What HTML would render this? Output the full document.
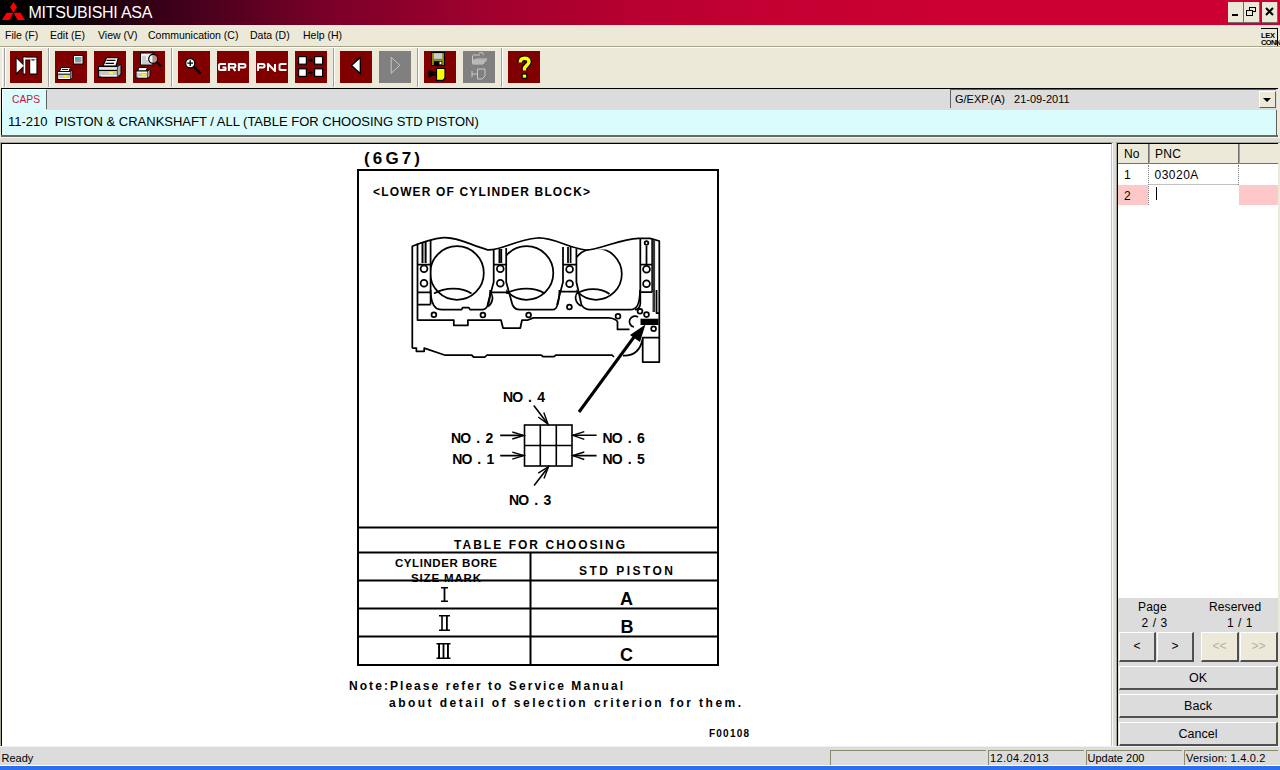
<!DOCTYPE html>
<html><head><meta charset="utf-8">
<style>
*{margin:0;padding:0;box-sizing:border-box}
html,body{width:1280px;height:770px;overflow:hidden}
body{position:relative;background:#ece9d8;font-family:"Liberation Sans",sans-serif;font-size:11px;color:#000}
.a{position:absolute}
.t{position:absolute;white-space:pre;line-height:1}
#title{left:0;top:0;width:1280px;height:25px;background:linear-gradient(90deg,#000 0px,#080004 60px,#380018 160px,#780028 320px,#a0002e 480px,#b80030 640px,#c60032 800px,#cc0033 960px,#cc0033 1280px)}
.ico{position:absolute;top:51px;width:32px;height:32px;background:#800000}
.ico.dis{background:#808080}
.sep{position:absolute;top:48px;width:2px;height:39px;border-left:1px solid #a0a0a0;border-right:1px solid #fff}
.grey{background:#dcdcdc}
.cyan{background:#dafcfc}
.btn{position:absolute;background:#dcdcdc;border-top:1px solid #fff;border-left:1px solid #fff;border-right:2px solid #505050;border-bottom:2px solid #505050;text-align:center;font-size:12px}
</style></head><body>
<!-- title bar -->
<div id="title" class="a"></div>
<svg class="a" style="left:0;top:0" width="30" height="25" viewBox="0 0 30 25">
<polygon points="13.5,2 17,7.3 13.5,12.6 10,7.3" fill="#f00"/>
<polygon points="2,20 6.5,12.8 13.3,12.8 9.5,20" fill="#f00"/>
<polygon points="25,20 20.5,12.8 13.7,12.8 17.5,20" fill="#f00"/>
</svg>
<div class="t" style="left:28.5px;top:5px;font-size:16px;letter-spacing:-0.25px;color:#fff">MITSUBISHI ASA</div>
<div class="a" style="left:1228px;top:2px;width:16px;height:21px;background:#ece9d8;border-right:1px solid #707070;border-bottom:1px solid #707070"></div>
<div class="a" style="left:1244px;top:2px;width:16px;height:21px;background:#ece9d8;border-right:1px solid #707070;border-bottom:1px solid #707070"></div>
<div class="a" style="left:1262px;top:2px;width:16px;height:21px;background:#ece9d8;border-right:1px solid #707070;border-bottom:1px solid #707070"></div>
<div class="a" style="left:1232px;top:14px;width:6px;height:2px;background:#000"></div>
<svg class="a" style="left:1244px;top:2px" width="16" height="21"><rect x="5.5" y="5.5" width="6" height="4" fill="none" stroke="#000"/><rect x="2.5" y="8.5" width="6" height="5" fill="#ece9d8" stroke="#000"/></svg>
<svg class="a" style="left:1262px;top:2px" width="16" height="21"><path d="M4 6 L11 13 M11 6 L4 13" stroke="#000" stroke-width="2"/></svg>

<!-- menu -->
<div class="t" style="left:5px;top:30px;font-size:10.5px">File (F)</div>
<div class="t" style="left:50px;top:30px;font-size:10.5px">Edit (E)</div>
<div class="t" style="left:98px;top:30px;font-size:10.5px">View (V)</div>
<div class="t" style="left:148px;top:30px;font-size:10.5px">Communication (C)</div>
<div class="t" style="left:250px;top:30px;font-size:10.5px">Data (D)</div>
<div class="t" style="left:303px;top:30px;font-size:10.5px">Help (H)</div>
<div class="a" style="left:1261px;top:28px;width:17px;height:18px;border-top:1px solid #000;border-right:1px solid #000"></div><div class="t" style="left:1261px;top:32px;font-size:7.5px;font-weight:bold;letter-spacing:-0.3px">LEX</div><div class="t" style="left:1261px;top:39px;font-size:7.5px;font-weight:bold;letter-spacing:-0.6px">CONN</div>
<div class="a" style="left:0;top:46px;width:1280px;height:1px;background:#a8a58c"></div>
<div class="a" style="left:0;top:47px;width:1280px;height:1px;background:#fff"></div>

<!-- toolbar -->
<div class="a" style="left:2px;top:48px;width:1px;height:39px;background:#fff"></div>
<div class="sep" style="left:4px"></div>
<div class="sep" style="left:48px"></div>
<div class="sep" style="left:171px"></div>
<div class="sep" style="left:333px"></div>
<div class="sep" style="left:417px"></div>
<div class="sep" style="left:501px"></div>
<div class="ico" style="left:10px"></div>
<div class="ico" style="left:55px"></div>
<div class="ico" style="left:94px"></div>
<div class="ico" style="left:133px"></div>
<div class="ico" style="left:178px"></div>
<div class="ico" style="left:217px"></div>
<div class="ico" style="left:256px"></div>
<div class="ico" style="left:295px"></div>
<div class="ico" style="left:340px"></div>
<div class="ico dis" style="left:379px"></div>
<div class="ico" style="left:424px"></div>
<div class="ico dis" style="left:463px"></div>
<div class="ico" style="left:508px"></div>
<svg class="a" style="left:10px;top:51px" width="32" height="32" viewBox="0 0 32 32">
<g fill="#000"><path d="M5.6 5.2V24.2L15.2 14.7Z"/><rect x="12.6" y="5.6" width="3.6" height="18"/><rect x="12.6" y="5.6" width="14.8" height="3.8"/><rect x="19.2" y="7.6" width="8.2" height="16"/></g>
<g fill="#fff"><path d="M6.6 7.6V21.8L13.8 14.7Z"/><rect x="13.6" y="6.6" width="1.7" height="16"/><rect x="13.6" y="6.6" width="12.8" height="1.9"/><rect x="20.2" y="8.5" width="6.2" height="14"/></g>
<rect x="21.5" y="8.5" width="3" height="1" fill="#000"/>
</svg>
<svg class="a" style="left:55px;top:51px" width="32" height="32" viewBox="0 0 32 32">
<rect x="18.5" y="4.5" width="9.5" height="8.5" fill="#fff" stroke="#000"/>
<rect x="20" y="6" width="6.5" height="5.5" fill="#999"/>
<rect x="20" y="6" width="3.5" height="3" fill="#0cc"/>
<path d="M6 16.5H15.5L14 20.5H4.5Z" fill="#fff" stroke="#000"/>
<path d="M7 18.5H13" stroke="#000" stroke-width=".9"/>
<rect x="2.5" y="20.5" width="13" height="8" fill="#c8c8c8" stroke="#000"/>
<path d="M3 21.5H15M4 27.5H15" stroke="#fff"/>
<path d="M3 23.3H15" stroke="#000" stroke-width=".8"/>
<rect x="8.5" y="24.5" width="3.5" height="1.5" fill="#ff0"/>
<path d="M15.5 20.5L17.2 19V26.5L15.5 28.5" fill="#aaa" stroke="#000" stroke-width=".8"/>
</svg>
<svg class="a" style="left:94px;top:51px" width="32" height="32" viewBox="0 0 32 32">
<path d="M12.5 6.6H24.4L22 15H9Z" fill="#fff" stroke="#000" stroke-width="1.2"/>
<path d="M12.5 9.3H21.5M11.5 12.3H20" stroke="#000" stroke-width="1.2"/>
<rect x="4.5" y="15.5" width="19" height="10.5" fill="#c8c8c8" stroke="#000" stroke-width="1.2"/>
<path d="M5 17H23M7 24.8H23" stroke="#fff" stroke-width="1.2"/>
<path d="M5 19.5H23" stroke="#000" stroke-width="1"/>
<rect x="15" y="21" width="4" height="2" fill="#ff0"/>
<path d="M23.5 15.5L27 13V23L23.5 26" fill="#b0b0b0" stroke="#000" stroke-width="1"/>
</svg>
<svg class="a" style="left:133px;top:51px" width="32" height="32" viewBox="0 0 32 32">
<rect x="7.5" y="2" width="12.5" height="12" fill="#f0f0f0" stroke="#000"/>
<path d="M9 6H13M9 8H13M9 10H17M9 12H19" stroke="#aaa"/>
<circle cx="20.2" cy="7.8" r="4.5" fill="rgba(255,255,255,0.55)" stroke="#000" stroke-width="1.2"/>
<path d="M23.5 11L28.2 15.2" stroke="#000" stroke-width="2"/>
<path d="M6 16.5H14.5L13 20H4.5Z" fill="#fff" stroke="#000"/>
<rect x="3" y="20" width="12" height="7" fill="#c8c8c8" stroke="#000"/>
<path d="M4 21.3H14M5 26H14" stroke="#fff"/>
<rect x="9" y="23" width="3.5" height="1.5" fill="#ff0"/>
<path d="M15 20L17 18V25L15 27" fill="#aaa" stroke="#000" stroke-width=".8"/>
</svg>
<svg class="a" style="left:178px;top:51px" width="32" height="32" viewBox="0 0 32 32">
<path d="M15.5 15.5L22.5 22.5" stroke="#000" stroke-width="2.4"/>
<circle cx="12.2" cy="12.2" r="4.6" fill="#fff" stroke="#000" stroke-width="1.3"/>
<path d="M9.3 12.2H15.1M12.2 9.3V15.1" stroke="#000" stroke-width="1.3"/>
</svg>
<svg class="a" style="left:217px;top:51px" width="32" height="32" viewBox="0 0 32 32">
<path d="M9 13H3.5Q2 13 2 14.5V17.5Q2 19 3.5 19H8.5V16.5H5.5 M11.9 20V13H16.9Q18.4 13 18.4 14.5V15Q18.4 16.5 16.9 16.5H11.9 M15.9 16.5L18.4 20 M21.9 20V13H26.9Q28.4 13 28.4 14.5V15Q28.4 16.5 26.9 16.5H21.9" fill="none" stroke="#fff" stroke-width="2" stroke-linejoin="round"/>
</svg>
<svg class="a" style="left:256px;top:51px" width="32" height="32" viewBox="0 0 32 32">
<path d="M2 20V13H7Q8.5 13 8.5 14.5V15Q8.5 16.5 7 16.5H2 M12 20V13L19 20V13 M30.5 13H25Q23.5 13 23.5 14.5V17.5Q23.5 19 25 19H30.5" fill="none" stroke="#fff" stroke-width="2" stroke-linejoin="round"/>
</svg>
<svg class="a" style="left:295px;top:51px" width="32" height="32" viewBox="0 0 32 32">
<g fill="#fff" stroke="#000" stroke-width="1.2">
<rect x="3.6" y="5.6" width="7.8" height="7.6"/><rect x="19.6" y="5.6" width="8" height="7.6"/>
<rect x="3.6" y="17.8" width="7.8" height="7.6"/><rect x="19.6" y="17.8" width="8" height="7.6"/>
</g>
<path d="M13 9.4H16M13 21.6H16" stroke="#000" stroke-width="1.3"/>
<path d="M15.5 7.3L18.2 9.4L15.5 11.5ZM15.5 19.5L18.2 21.6L15.5 23.7Z" fill="#000"/>
</svg>
<svg class="a" style="left:340px;top:51px" width="32" height="32" viewBox="0 0 32 32">
<path d="M11.4 14.4L20.3 6.5V22.5Z" fill="#fff" stroke="#000" stroke-width="1.3"/>
</svg>
<svg class="a" style="left:379px;top:51px" width="32" height="32" viewBox="0 0 32 32">
<path d="M12.2 6.3V22.3L20.8 14.3Z" fill="none" stroke="#c8c8c8" stroke-width="1"/>
</svg>
<svg class="a" style="left:424px;top:51px" width="32" height="32" viewBox="0 0 32 32">
<rect x="7.5" y="1.5" width="13" height="13" fill="#8a8a10" stroke="#000" stroke-width="1"/>
<rect x="9.9" y="2.2" width="8.3" height="5.6" fill="#ccc"/>
<rect x="9.9" y="10.2" width="8.3" height="3.8" fill="#000"/>
<rect x="15.5" y="10.8" width="2" height="2.6" fill="#fff"/>
<path d="M12.5 17.5H21V27L19 29.3H12.5Z" fill="#ff0" stroke="#000" stroke-width="1.2"/>
<path d="M5 19.5L9 21.5H13M5 19.5V26L9 24H12" fill="#000" stroke="#000" stroke-width="1.2"/>
</svg>
<svg class="a" style="left:463px;top:51px" width="32" height="32" viewBox="0 0 32 32">
<g fill="none" stroke="#c8c8c8" stroke-width="1">
<path d="M9.5 4.5V12M10 4H17M9.5 13L13 8H24L20 13Z" />
<path d="M16 2L19.5 1.5L20.5 4"/>
<path d="M14.5 18H22V25L19 28H14.5V18M9 20V26M9 23H14"/>
</g>
<path d="M10 8.5H24L20 13H9.5Z" fill="#b8b8b8"/>
</svg>
<svg class="a" style="left:508px;top:51px" width="32" height="32" viewBox="0 0 32 32">
<path d="M12.2 11.6C12.2 8.6 14 7.3 16.5 7.3C19.2 7.3 21 8.8 21 11.1C21 13.8 17.2 14.6 16.5 17.3V19.6" fill="none" stroke="#000" stroke-width="5.6"/>
<rect x="13.7" y="22.5" width="5.6" height="5.3" fill="#000"/>
<path d="M12.2 11.6C12.2 8.6 14 7.3 16.5 7.3C19.2 7.3 21 8.8 21 11.1C21 13.8 17.2 14.6 16.5 17.3V19.6" fill="none" stroke="#ff0" stroke-width="3.4"/>
<rect x="14.8" y="23.6" width="3.4" height="3.1" fill="#ff0"/>
</svg>


<!-- tab strip -->
<div class="a" style="left:1px;top:88px;width:1277px;height:1px;background:#000"></div>
<div class="a" style="left:1px;top:88px;width:1px;height:49px;background:#000"></div>
<div class="a grey" style="left:2px;top:89px;width:1275px;height:21px"></div>
<div class="a cyan" style="left:2px;top:89px;width:44px;height:21px;border-top:1px solid #fff;border-left:1px solid #fff"></div>
<div class="a" style="left:46px;top:90px;width:1px;height:19px;background:#606060"></div>
<div class="t" style="left:12px;top:95px;font-size:10.3px;color:#d0103a">CAPS</div>
<div class="a grey" style="left:950px;top:89px;width:326px;height:19px;border-top:1px solid #606060;border-left:1px solid #606060"></div>
<div class="t" style="left:955px;top:94px;font-size:11px">G/EXP.(A)   21-09-2011</div>
<div class="a" style="left:1259px;top:91px;width:17px;height:17px;background:#ece9d8;border-top:1px solid #fff;border-left:1px solid #fff;border-right:1px solid #606060;border-bottom:1px solid #606060"></div>
<svg class="a" style="left:1259px;top:91px" width="17" height="17"><polygon points="4,7 12,7 8,11" fill="#000"/></svg>
<div class="a cyan" style="left:2px;top:110px;width:1275px;height:25px"></div>
<div class="a" style="left:1276px;top:110px;width:1px;height:26px;background:#606060"></div>
<div class="a" style="left:1px;top:135px;width:1277px;height:2px;background:#6a6a5a"></div>
<div class="t" style="left:8px;top:115px;font-size:13px">11-210  PISTON &amp; CRANKSHAFT / ALL (TABLE FOR CHOOSING STD PISTON)</div>
<div class="a" style="left:0;top:137px;width:1280px;height:1px;background:#f4f4f4"></div>
<div class="a grey" style="left:0;top:138px;width:1280px;height:4px"></div>

<!-- main panel -->
<div class="a" style="left:0;top:142px;width:1280px;height:1px;background:#a8a890"></div>
<div class="a" style="left:0;top:142px;width:1px;height:604px;background:#a8a890"></div>
<div class="a" style="left:1px;top:143px;width:1111px;height:603px;background:#fff;border-top:1px solid #000;border-left:1px solid #000;border-right:1px solid #c4c4c4"></div>
<div class="a" style="left:1112px;top:143px;width:1px;height:603px;background:#fafafa"></div>
<div class="a grey" style="left:1113px;top:142px;width:3px;height:604px"></div>
<div class="a" style="left:1116px;top:142px;width:1px;height:604px;background:#a8a890"></div>
<div class="a" style="left:1117px;top:143px;width:161px;height:603px;background:#fff;border-top:1px solid #000;border-left:1px solid #000"></div>
<svg class="a" style="left:0;top:0" width="1280" height="770" viewBox="0 0 1280 770">
<g font-family="Liberation Sans" font-weight="bold" fill="#000">
<text x="364" y="164" font-size="17" textLength="56" lengthAdjust="spacing">(6G7)</text>
<text x="373" y="195.6" font-size="12" textLength="217" lengthAdjust="spacing">&lt;LOWER OF CYLINDER BLOCK&gt;</text>
<text x="503.0 512.2 528.1 537.3" y="401.8" font-size="14">NO.4</text>
<text x="451.1 460.3 476.2 485.4" y="443.2" font-size="14">NO.2</text>
<text x="452.2 461.4 477.3 486.5" y="463.6" font-size="14">NO.1</text>
<text x="602.6 611.8 627.7 636.9" y="443.1" font-size="14">NO.6</text>
<text x="602.6 611.8 627.7 636.9" y="463.5" font-size="14">NO.5</text>
<text x="509.1 518.3 534.2 543.4" y="505.0" font-size="14">NO.3</text>
<text x="454" y="548.5" font-size="12" textLength="171" lengthAdjust="spacing">TABLE FOR CHOOSING</text>
<text x="395" y="567" font-size="11.5" textLength="102" lengthAdjust="spacing">CYLINDER BORE</text>
<text x="411" y="581.5" font-size="11.5" textLength="70" lengthAdjust="spacing">SIZE MARK</text>
<text x="579" y="574.5" font-size="12" textLength="94" lengthAdjust="spacing">STD PISTON</text>
<text x="620" y="604.5" font-size="18">A</text>
<text x="620.5" y="632.5" font-size="18">B</text>
<text x="620" y="660.5" font-size="18">C</text>
<text x="349" y="689.6" font-size="12" textLength="274" lengthAdjust="spacing">Note:Please refer to Service Manual</text>
<text x="389" y="706.6" font-size="12" textLength="352" lengthAdjust="spacing">about detail of selection criterion for them.</text>
<text x="709" y="737" font-size="10" textLength="40" lengthAdjust="spacing">F00108</text>
</g>
<g fill="none" stroke="#000" stroke-width="2">
<rect x="358" y="170" width="360" height="495"/>
<path d="M358 527.5H718M358 552.5H718M358 580.5H718M358 608.5H718M358 636.5H718M530.5 552.5V665"/>
</g>
<!-- roman numerals -->
<g fill="#000">
<path d="M441 587h7v1.5h-2.6v12h2.6v1.5h-7v-1.5h2.6v-12h-2.6z"/>
<path d="M439 615h11v1.6h-2.2v12.8h2.2v1.6h-11v-1.6h2.2v-12.8h-2.2zM442.8 616.6v12.8h3.2v-12.8z"/>
<path d="M436.5 643h14v1.6h-1.6v12.8h1.6v1.6h-14v-1.6h1.6v-12.8h-1.6zM440 644.6v12.8h2.6v-12.8zM444.4 644.6v12.8h2.6v-12.8z"/>
</g>
<!-- position diagram -->
<g fill="none" stroke="#000" stroke-width="1.6">
<rect x="524.5" y="425" width="47.5" height="41"/>
<path d="M540.3 425V466M556.3 425V466M524.5 445.5H572"/>
<path d="M500.2 435.4H523M500.2 455.6H523M573 435.3H596.6M573 455.6H596.6M533.8 405.4L547.5 423.5M534.1 485.4L548 467.5"/>
<path d="M512.3 432L523.8 435.4L512.3 439M512.3 452.2L523.8 455.6L512.3 459.2M584.3 431.7L572.8 435.3L584.3 439.3M584.3 452L572.8 455.6L584.3 459.5M538.2 417L548 424L543.8 412.6M538.2 473.2L548.5 466.7L544 478.4" stroke-width="1.4" stroke-linejoin="miter"/>
</g>
<path d="M579 412L637 333" stroke="#000" stroke-width="3"/>
<polygon points="645.5,324.5 640,342 630,335" fill="#000"/>
<!-- engine block -->
<g fill="none" stroke="#000" stroke-width="1.75" stroke-linejoin="round">
<path d="M412.3 348.2V246.3C420 243 430 239 443.7 237.6C458 237 470 245 487.5 249.8C500 251 515 240 537.5 238C555 237.5 568 248 585.7 250C600 250 620 238.5 638.7 238.3H650L659.3 241V362H642.7V337.6H659.3"/>
<path d="M412.3 348.2H416.4V351.3H424.2V348.2L444.5 355H471.5L473.6 357H485L487 355H541L543 356.7H554L556 355H612L614 357"/>
<path d="M642.7 339C640 352 632 356 623 355.6"/>
<path d="M417.5 243.5V320H453.8V325.3H467.9V320H501L503 328H520.3L522 320H528L533.3 317.9H608.7C613 318 617 320 617.5 321.7V329.4H629.5"/>
<path d="M430.6 240V304.5M417.5 264.7H430.6M417.5 292.3H430.6M417.5 304.5H430.6"/>
<path d="M422.5 242V263M425.6 241V263" stroke-width="2"/>
<path d="M493.7 250V282L487.5 305M506.2 248V282L512.5 305M493.7 264.7H506.2M490 292.3H509.5M499.4 249V263M501.3 249V263"/>
<path d="M563 247V282L557 305M576.4 249V282L581.5 305M563 264.5H576.4M560 291.7H579M568 247V263M570.6 247V263"/>
<path d="M640.3 238.5V304C640 308 637 309.7 635 309.7M652.2 238.5V292M640.3 264.5H652.2M640.3 292H652.2M646.5 246V264"/>
<path d="M653.8 240V312" stroke="#333" stroke-width="2.6"/>
<path d="M656.5 290V313H659"/>
<path d="M430.6 290C430.6 300 432 304.5 436 308C438 309.5 440 309.7 445 309.7H461.6L462.7 307.7H468.9L470 309.7H482C486 309.7 490 306 490.2 290"/>
<path d="M512.5 305C514 308 516 309.7 520 309.7H553C556 309.7 559 306 559.5 290"/>
<path d="M581.5 305C584 308.5 586 309.7 590 309.7H630C636 309.7 640 306 640 290"/>
<path d="M490.2 292C494 296 493 303 488 306.6M577.9 292C574 296 575 303 581.4 306"/>
<clipPath id="c1"><rect x="430.6" y="230" width="60" height="80"/></clipPath>
<clipPath id="c2"><rect x="506.2" y="230" width="60" height="80"/></clipPath>
<clipPath id="c3"><rect x="576.4" y="249.5" width="60" height="60"/></clipPath>
<circle cx="457" cy="273" r="26.8" clip-path="url(#c1)"/>
<path d="M434 293.5C445 287 462 287 471.5 293.5"/>
<circle cx="526.5" cy="273" r="26.8" clip-path="url(#c2)"/>
<path d="M506.2 293.5C518 287 535 287 545 293.5"/>
<circle cx="596" cy="274" r="25.8" clip-path="url(#c3)"/>
<path d="M576.9 293.6C585 288 600 287 609.6 294"/>
<circle cx="424" cy="268.8" r="3.4"/><circle cx="424" cy="283.2" r="3.4"/>
<circle cx="500.3" cy="268.8" r="3.4"/><circle cx="500.3" cy="283.2" r="3.4"/>
<circle cx="569.6" cy="269.2" r="3.4"/><circle cx="569.6" cy="283.7" r="3.4"/>
<circle cx="646.5" cy="269.2" r="3.4"/><circle cx="646.5" cy="283.7" r="3.4"/>
<circle cx="646.5" cy="243" r="1.8"/>
<circle cx="433.9" cy="314.7" r="2.4"/><circle cx="482.9" cy="315" r="2.4"/><circle cx="528.6" cy="315" r="2.4"/>
<circle cx="569.4" cy="307" r="2.4"/><circle cx="618" cy="316.2" r="2.4"/><circle cx="640" cy="311.3" r="2.4"/><circle cx="646.5" cy="314.6" r="2.4"/><circle cx="653.6" cy="328.8" r="2.4"/>
<path d="M634 327A5.5 5.5 0 1 1 638 317"/>
</g>
<rect x="640.5" y="318.7" width="18" height="6.3" fill="#000"/>
</svg>


<!-- grid -->
<div class="a" style="left:1118px;top:144px;width:160px;height:20px;background:#ece9d8;border-bottom:1px solid #707070"></div>
<div class="a" style="left:1148px;top:144px;width:2px;height:20px;background:#707070;border-right:1px solid #a0a0a0"></div>
<div class="a" style="left:1238px;top:144px;width:2px;height:20px;background:#707070;border-right:1px solid #a0a0a0"></div>
<div class="t" style="left:1124px;top:148px;font-size:12px">No</div>
<div class="t" style="left:1155px;top:148px;font-size:12px;letter-spacing:0.3px">PNC</div>
<div class="a" style="left:1148px;top:165px;width:1px;height:40px;border-left:1px dotted #808080"></div>
<div class="a" style="left:1238px;top:165px;width:1px;height:20px;border-left:1px dotted #808080"></div>
<div class="a" style="left:1149px;top:184px;width:89px;height:1px;background:#c0c0c0"></div>
<div class="t" style="left:1124px;top:169px;font-size:12px">1</div>
<div class="t" style="left:1154.5px;top:169px;font-size:12px;letter-spacing:0.5px">03020A</div>
<div class="a" style="left:1118px;top:185px;width:30px;height:20px;background:#ffc8c8"></div>
<div class="a" style="left:1239px;top:185px;width:39px;height:20px;background:#ffc8c8"></div>
<div class="t" style="left:1124px;top:190px;font-size:12px">2</div>
<div class="a" style="left:1156px;top:187px;width:1px;height:13px;background:#000"></div>

<!-- right bottom panel -->
<div class="a grey" style="left:1118px;top:598px;width:160px;height:148px"></div>
<div class="t" style="left:1138px;top:601px;font-size:12px;letter-spacing:0.2px">Page</div>
<div class="t" style="left:1141.5px;top:617px;font-size:12px;letter-spacing:0.6px">2 / 3</div>
<div class="t" style="left:1209px;top:601px;font-size:12px;letter-spacing:0.1px">Reserved</div>
<div class="t" style="left:1227px;top:617px;font-size:12px;letter-spacing:0.5px">1 / 1</div>
<div class="btn" style="left:1119px;top:632px;width:37px;height:30px;line-height:27px">&lt;</div>
<div class="btn" style="left:1157px;top:632px;width:37px;height:30px;line-height:27px">&gt;</div>
<div class="btn" style="left:1201px;top:632px;width:38px;height:30px;line-height:27px;background:#ece9d8;color:#b0b0b0">&lt;&lt;</div>
<div class="btn" style="left:1240px;top:632px;width:38px;height:30px;line-height:27px;background:#ece9d8;color:#b0b0b0">&gt;&gt;</div>
<div class="btn" style="left:1119px;top:666px;width:159px;height:24px;line-height:22px;font-size:12.5px">OK</div>
<div class="btn" style="left:1119px;top:694px;width:159px;height:24px;line-height:22px;font-size:12.5px">Back</div>
<div class="btn" style="left:1119px;top:722px;width:159px;height:24px;line-height:22px;font-size:12.5px">Cancel</div>

<!-- status bar -->
<div class="a grey" style="left:0;top:746px;width:1280px;height:20px;border-top:1px solid #f0f0f0;border-bottom:1px solid #fff"></div>
<div class="t" style="left:1.5px;top:753px;font-size:11px">Ready</div>
<div class="a" style="left:830px;top:750px;width:156px;height:15px;border-top:1px solid #8a8a70;border-left:1px solid #8a8a70"></div>
<div class="a" style="left:988px;top:750px;width:96px;height:15px;border-top:1px solid #8a8a70;border-left:1px solid #8a8a70"></div>
<div class="a" style="left:1086px;top:750px;width:96px;height:15px;border-top:1px solid #8a8a70;border-left:1px solid #8a8a70"></div>
<div class="a" style="left:1184px;top:750px;width:94px;height:15px;border-top:1px solid #8a8a70;border-left:1px solid #8a8a70"></div>
<div class="t" style="left:990px;top:753px;font-size:11px;letter-spacing:0.4px">12.04.2013</div>
<div class="t" style="left:1087.5px;top:753px;font-size:11px">Update 200</div>
<div class="t" style="left:1186px;top:753px;font-size:11px;letter-spacing:0.2px">Version: 1.4.0.2</div>
<div class="a" style="left:0;top:766px;width:1280px;height:4px;background:#2c6ef0"></div>
</body></html>
